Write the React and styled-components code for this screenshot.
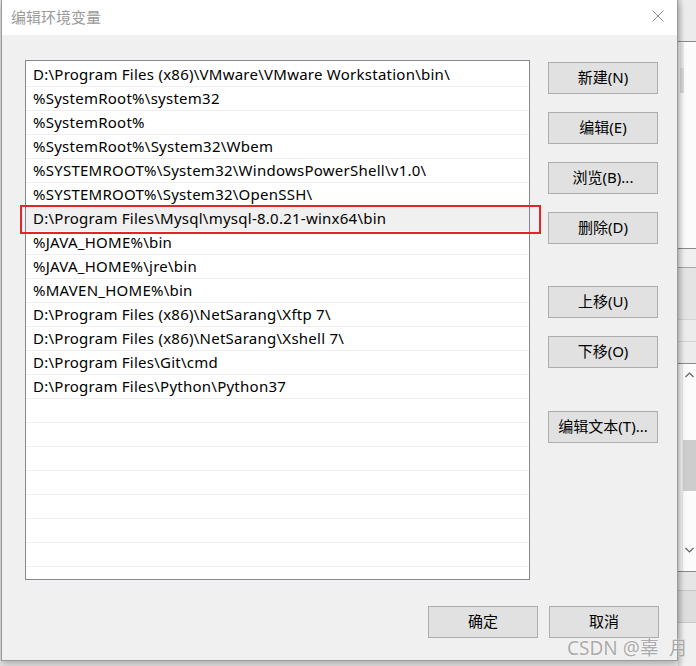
import React from 'react';
import styled, { createGlobalStyle } from 'styled-components';

const GlobalStyle = createGlobalStyle`
  html, body {
    margin: 0;
    padding: 0;
    background: #e9e9e9;
  }
  * {
    box-sizing: border-box;
  }
`;

const uiFont = `"Noto Sans", "Noto Sans CJK SC", sans-serif`;

const Screen = styled.div`
  position: relative;
  display: flex;
  width: 696px;
  height: 666px;
  padding-left: 1px;
  overflow: hidden;
  background: #e9e9e9;
  font-family: ${uiFont};
`;

const Dialog = styled.div`
  position: relative;
  z-index: 1;
  display: flex;
  flex-direction: column;
  flex: 0 0 677px;
  height: 661px;
  background: #f0f0f0;
  border: 1px solid #9a9a9a;
  border-top: none;
  box-shadow: 0 3px 8px rgba(0, 0, 0, 0.28);
`;

const TitleBar = styled.div`
  display: flex;
  align-items: center;
  justify-content: space-between;
  height: 35px;
  padding: 0 13px 3px 9px;
  background: #ffffff;
`;

const Title = styled.span`
  font-family: "Noto Sans CJK SC", sans-serif;
  font-size: 15px;
  color: #9a9a9a;
`;

const CloseButton = styled.div`
  display: flex;
  width: 12px;
  height: 12px;
`;

const Body = styled.div`
  position: relative;
  display: flex;
  flex-direction: column;
  flex: 1;
  padding: 25px 18px 22px 23px;
`;

const Main = styled.div`
  display: flex;
  gap: 18px;
`;

const ListBox = styled.div`
  width: 505px;
  height: 520px;
  padding-top: 2px;
  background: #ffffff;
  border: 1px solid #828790;
  overflow: hidden;
`;

const PathRow = styled.div`
  height: 24px;
  padding-left: 7px;
  border-bottom: 1px solid #efefef;
  background: ${(p) => (p.$selected ? '#f0f0f0' : '#ffffff')};
  font-size: 15px;
  letter-spacing: 0.25px;
  line-height: 23px;
  color: #000000;
  white-space: nowrap;
`;

const ButtonColumn = styled.div`
  display: flex;
  flex-direction: column;
  width: 110px;
  padding-top: 2px;
`;

const ActionButton = styled.button`
  width: 110px;
  height: 32px;
  margin-top: ${(p) => p.$gap || 0}px;
  padding: 0 0 3px;
  background: #e1e1e1;
  border: 1px solid #adadad;
  border-radius: 0;
  font-family: ${uiFont};
  font-size: 15px;
  color: #000000;
  cursor: default;
`;

const Footer = styled.div`
  display: flex;
  justify-content: flex-end;
  gap: 11px;
  margin-top: 26px;
`;

const Highlight = styled.div`
  position: absolute;
  left: 18px;
  top: 170px;
  width: 521px;
  height: 29px;
  border: 2px solid #e3242b;
  pointer-events: none;
`;

/* window behind the dialog, only a thin strip of it shows */
const Backdrop = styled.div`
  position: relative;
  display: flex;
  flex-direction: column;
  flex: 1;
  height: 666px;
`;

const Band = styled.div`
  flex: 0 0 ${(p) => p.$h}px;
  background: ${(p) => p.$bg};
  border-bottom: ${(p) => (p.$line ? `1px solid ${p.$line}` : 'none')};
`;

const Panel = styled.div`
  position: relative;
  flex: 0 0 ${(p) => p.$h}px;
  background: #fbfbfb;
  border-bottom: 1px solid #8a8a8a;
`;

const ThinThumb = styled.div`
  position: absolute;
  left: 2px;
  top: 1px;
  width: 4px;
  height: 50px;
  background: linear-gradient(#ececec 0 50%, #dcdcdc 50% 100%);
`;

const Track = styled.div`
  position: absolute;
  left: 4px;
  top: 0;
  bottom: 0;
  right: 0;
  display: flex;
  flex-direction: column;
  align-items: center;
  border-left: 1px solid #ececec;
`;

const Chevron = styled.div`
  display: flex;
  justify-content: flex-end;
  width: 100%;
  padding: ${(p) => p.$pad};
`;

const Thumb = styled.div`
  align-self: stretch;
  height: 51px;
  margin: ${(p) => p.$m};
  background: #cdcdcd;
`;

const Shade = styled.div`
  position: absolute;
  left: 0;
  top: 0;
  bottom: 0;
  width: 6px;
  background: linear-gradient(to right, rgba(0, 0, 0, 0.12), rgba(0, 0, 0, 0));
  pointer-events: none;
`;

const Watermark = styled.div`
  position: absolute;
  left: 567px;
  top: 633px;
  z-index: 2;
  font-family: "Noto Sans", "Noto Sans CJK SC", sans-serif;
  font-size: 19px;
  color: rgba(150, 150, 150, 0.8);
  text-shadow: 0 0 2px rgba(255, 255, 255, 0.9);
  white-space: pre;
`;

const paths = [
  'D:\\Program Files (x86)\\VMware\\VMware Workstation\\bin\\',
  '%SystemRoot%\\system32',
  '%SystemRoot%',
  '%SystemRoot%\\System32\\Wbem',
  '%SYSTEMROOT%\\System32\\WindowsPowerShell\\v1.0\\',
  '%SYSTEMROOT%\\System32\\OpenSSH\\',
  'D:\\Program Files\\Mysql\\mysql-8.0.21-winx64\\bin',
  '%JAVA_HOME%\\bin',
  '%JAVA_HOME%\\jre\\bin',
  '%MAVEN_HOME%\\bin',
  'D:\\Program Files (x86)\\NetSarang\\Xftp 7\\',
  'D:\\Program Files (x86)\\NetSarang\\Xshell 7\\',
  'D:\\Program Files\\Git\\cmd',
  'D:\\Program Files\\Python\\Python37',
  '', '', '', '', '', '', '', '',
];

const actions = [
  { label: '新建(N)', gap: 0 },
  { label: '编辑(E)', gap: 18 },
  { label: '浏览(B)...', gap: 18 },
  { label: '删除(D)', gap: 18 },
  { label: '上移(U)', gap: 42 },
  { label: '下移(O)', gap: 18 },
  { label: '编辑文本(T)...', gap: 43 },
];

const App = () => {
  return (
    <>
      <GlobalStyle />
      <Screen>
        <Dialog>
          <TitleBar>
            <Title>编辑环境变量</Title>
            <CloseButton>
              <svg width="12" height="12" viewBox="0 0 12 12">
                <path d="M0.5 0.5 L11.5 11.5 M11.5 0.5 L0.5 11.5" stroke="#8a8a8a" strokeWidth="1" fill="none" />
              </svg>
            </CloseButton>
          </TitleBar>
          <Body>
            <Main>
              <ListBox>
                {paths.map((p, i) => (
                  <PathRow key={i} $selected={i === 6}>{p}</PathRow>
                ))}
              </ListBox>
              <ButtonColumn>
                {actions.map((a) => (
                  <ActionButton key={a.label} $gap={a.gap}>{a.label}</ActionButton>
                ))}
              </ButtonColumn>
            </Main>
            <Footer>
              <ActionButton>确定</ActionButton>
              <ActionButton>取消</ActionButton>
            </Footer>
            <Highlight />
          </Body>
        </Dialog>
        <Backdrop>
          <Band $h={42} $bg="#ececec" $line="#8a8a8a" />
          <Panel $h={207}>
            <ThinThumb />
          </Panel>
          <Band $h={19} $bg="#f0f0f0" $line="#a8a8a8" />
          <Band $h={52} $bg="#e4e4e4" $line="#d2d2d2" />
          <Band $h={22} $bg="#ececec" $line="#d2d2d2" />
          <Band $h={22} $bg="#ececec" $line="#8a8a8a" />
          <Panel $h={208}>
            <Track>
              <Chevron $pad="8px 2px 0 0">
                <svg width="9" height="6" viewBox="0 0 9 6">
                  <path d="M0.5 5 L4.5 1 L8.5 5" stroke="#606060" strokeWidth="1.2" fill="none" />
                </svg>
              </Chevron>
              <Thumb $m="62px 0 0 0" />
              <Chevron $pad="56px 2px 0 0">
                <svg width="9" height="6" viewBox="0 0 9 6">
                  <path d="M0.5 1 L4.5 5 L8.5 1" stroke="#606060" strokeWidth="1.2" fill="none" />
                </svg>
              </Chevron>
            </Track>
          </Panel>
          <Band $h={19} $bg="#e6e6e6" $line="#c8c8c8" />
          <Band $h={32} $bg="#dedede" $line="#c8c8c8" />
          <Band $h={44} $bg="#f0f0f0" />
          <Shade />
        </Backdrop>
        <Watermark>{'CSDN @辜  月'}</Watermark>
      </Screen>
    </>
  );
};

export default App;
